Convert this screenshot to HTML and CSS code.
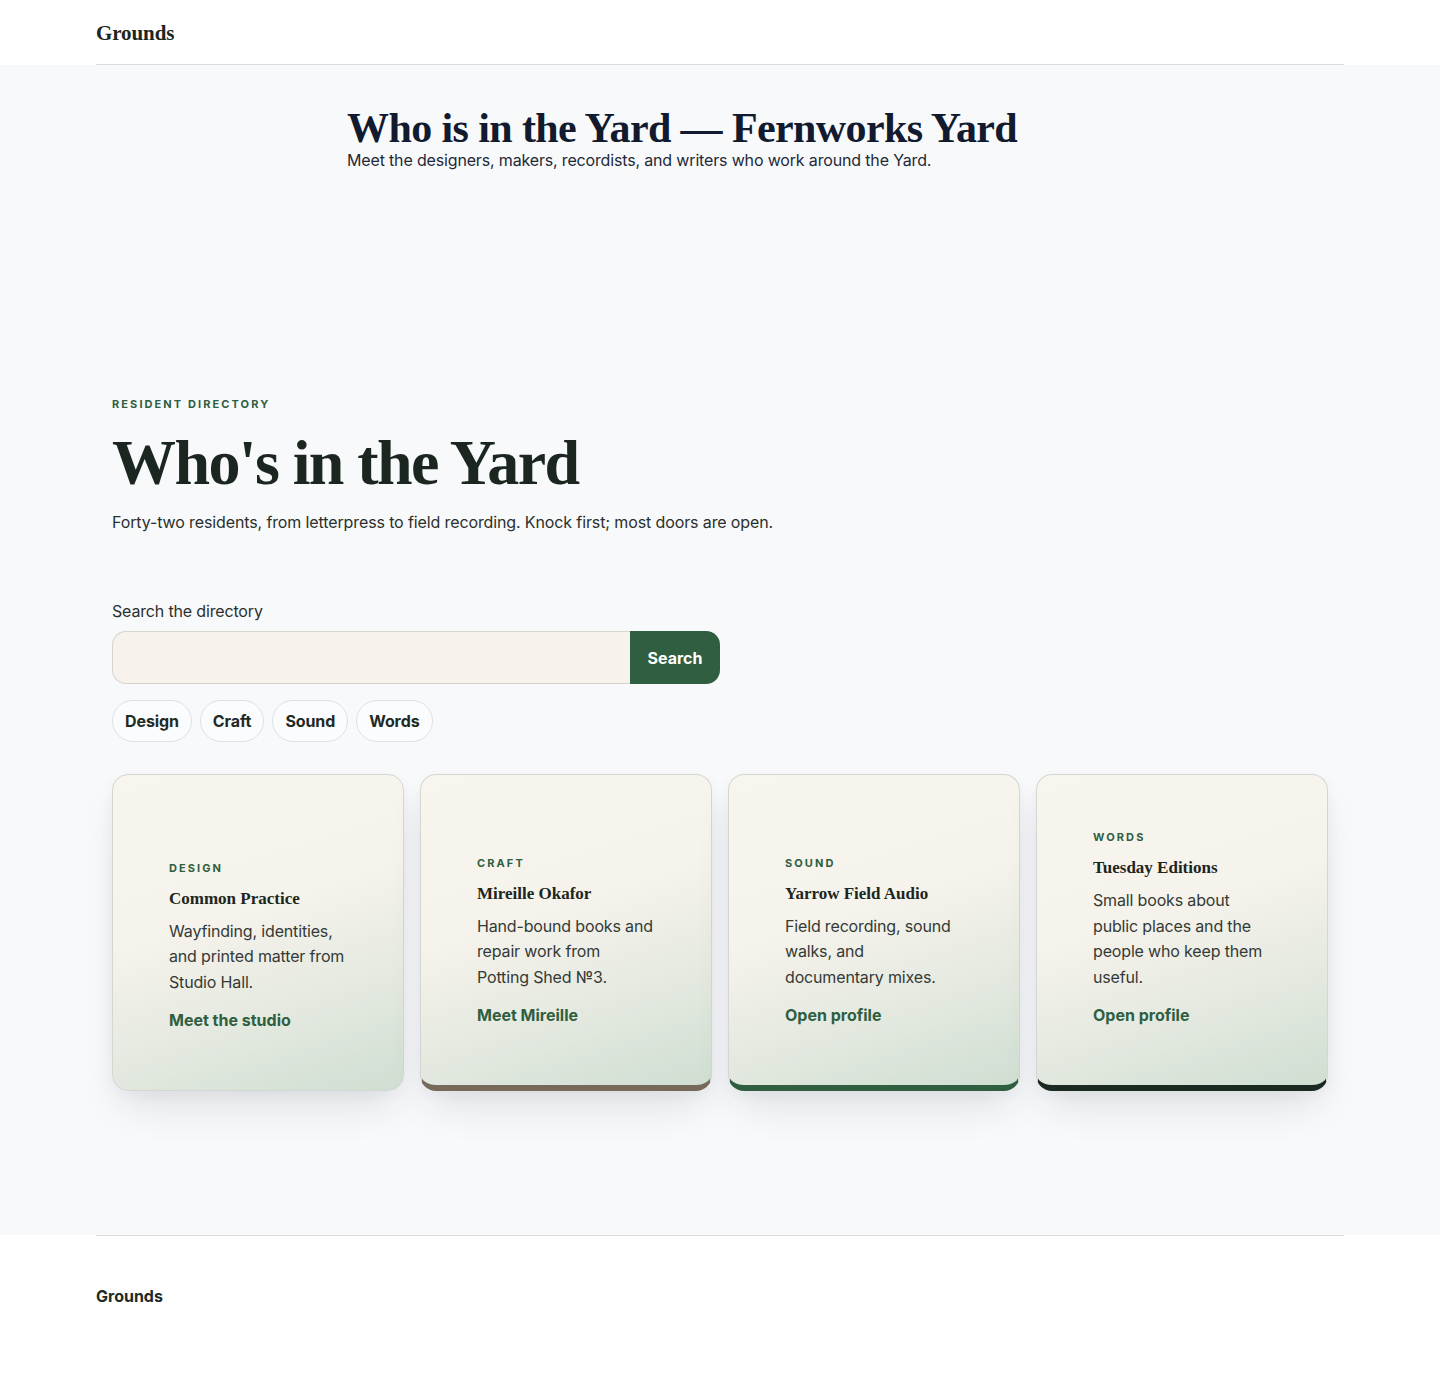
FILE: index.html
```html
<!DOCTYPE html>
<html lang="en">
<head>
<meta charset="utf-8">
<title>Who is in the Yard — Fernworks Yard</title>
<link rel="stylesheet" href="styles.css">
</head>
<body>
<header class="site-header">
  <div class="site-header__inner">
    <a class="logo" href="#">Grounds</a>
  </div>
</header>
<main class="page">
  <section class="intro">
    <h1 class="intro__title">Who is in the Yard — Fernworks Yard</h1>
    <p class="intro__sub">Meet the designers, makers, recordists, and writers who work around the Yard.</p>
  </section>
  <section class="directory">
    <p class="eyebrow">Resident directory</p>
    <h2 class="directory__title">Who's in the Yard</h2>
    <p class="directory__lede">Forty-two residents, from letterpress to field recording. Knock first; most doors are open.</p>
    <form class="search">
      <label class="search__label" for="q">Search the directory</label>
      <div class="search__row">
        <input class="search__input" id="q" type="text">
        <button class="search__btn" type="button">Search</button>
      </div>
    </form>
    <div class="chips">
      <button class="chip" type="button">Design</button>
      <button class="chip" type="button">Craft</button>
      <button class="chip" type="button">Sound</button>
      <button class="chip" type="button">Words</button>
    </div>
    <div class="cards">
      <article class="card">
        <p class="card__tag">Design</p>
        <h3 class="card__name">Common Practice</h3>
        <p class="card__text">Wayfinding, identities, and printed matter from Studio Hall.</p>
        <a class="card__link" href="#">Meet the studio</a>
      </article>
      <article class="card card--craft">
        <p class="card__tag">Craft</p>
        <h3 class="card__name">Mireille Okafor</h3>
        <p class="card__text">Hand-bound books and repair work from Potting Shed №3.</p>
        <a class="card__link" href="#">Meet Mireille</a>
      </article>
      <article class="card card--sound">
        <p class="card__tag">Sound</p>
        <h3 class="card__name">Yarrow Field Audio</h3>
        <p class="card__text">Field recording, sound walks, and documentary mixes.</p>
        <a class="card__link" href="#">Open profile</a>
      </article>
      <article class="card card--words">
        <p class="card__tag">Words</p>
        <h3 class="card__name">Tuesday Editions</h3>
        <p class="card__text">Small books about public places and the people who keep them useful.</p>
        <a class="card__link" href="#">Open profile</a>
      </article>
    </div>
  </section>
</main>
<footer class="site-footer">
  <div class="site-footer__inner">
    <span class="site-footer__brand">Grounds</span>
  </div>
</footer>
</body>
</html>
```
FILE: styles.css
```css
* { box-sizing: border-box; }

html, body {
  margin: 0;
  padding: 0;
}

body {
  font-family: Inter, "Noto Sans", "Liberation Sans", sans-serif;
  color: #1f2937;
  background: #ffffff;
  font-size: 16px;
  line-height: 1.5;
}

p, h1, h2, h3 { margin: 0; }

a { text-decoration: none; }

.site-header {
  background: #ffffff;
}

.site-header__inner {
  max-width: 1248px;
  margin: 0 auto;
  height: 65px;
  display: flex;
  align-items: center;
  border-bottom: 1px solid #dcdde0;
  padding-top: 3px;
}

.logo {
  font-family: "Liberation Serif", "Times New Roman", serif;
  font-weight: 700;
  font-size: 21px;
  color: #1c2620;
  letter-spacing: -0.1px;
}

.page {
  background: #f8f9fb;
  padding-bottom: 144px;
}

.intro {
  max-width: 746px;
  margin: 0 auto;
  padding-top: 42px;
}

.intro__title {
  font-family: "Liberation Serif", "Times New Roman", serif;
  font-weight: 700;
  font-size: 42px;
  line-height: 42px;
  color: #111a2e;
  letter-spacing: -0.6px;
  white-space: nowrap;
}

.intro__sub {
  margin-top: 1px;
  font-size: 16px;
  line-height: 20px;
  letter-spacing: -0.16px;
  color: #1f2937;
}

.directory {
  max-width: 1248px;
  margin: 0 auto;
  padding: 226px 16px 0;
}

.eyebrow {
  font-size: 11px;
  line-height: 16px;
  font-weight: 700;
  letter-spacing: 0.19em;
  text-transform: uppercase;
  color: #2f5e40;
}

.directory__title {
  margin-top: 16px;
  font-family: "Liberation Serif", "Times New Roman", serif;
  font-weight: 700;
  font-size: 64px;
  line-height: 70px;
  letter-spacing: -1.6px;
  color: #1c2620;
}

.directory__lede {
  margin-top: 12px;
  font-size: 16px;
  line-height: 24px;
  letter-spacing: -0.12px;
  color: #2a302c;
}

.search {
  margin-top: 65px;
  width: 608px;
}

.search__label {
  display: block;
  font-size: 16px;
  line-height: 24px;
  letter-spacing: -0.16px;
  color: #2a302c;
  margin-bottom: 8px;
}

.search__row {
  display: flex;
  height: 53px;
}

.search__input {
  flex: 1;
  min-width: 0;
  border: 1px solid #d6d4cf;
  border-right: 0;
  border-radius: 14px 0 0 14px;
  background: #f7f3ec;
  font: inherit;
  padding: 0 16px;
}

.search__btn {
  width: 90px;
  border: 0;
  border-radius: 0 14px 14px 0;
  background: #2f5e40;
  color: #ffffff;
  font: inherit;
  font-weight: 700;
  font-size: 16px;
  cursor: pointer;
}

.chips {
  display: flex;
  gap: 8px;
  margin-top: 16px;
}

.chip {
  height: 42px;
  padding: 0 12px;
  border: 1px solid #dfe1e4;
  border-radius: 999px;
  background: #fbfcfd;
  font: inherit;
  font-weight: 700;
  font-size: 16px;
  letter-spacing: -0.1px;
  color: #1f2a24;
}

.cards {
  margin-top: 32px;
  display: grid;
  grid-template-columns: repeat(4, 1fr);
  gap: 16px;
}

.card {
  display: flex;
  flex-direction: column;
  justify-content: flex-end;
  padding: 54px 56px 58px 56px;
  border: 1px solid #d3d6d2;
  border-radius: 16px;
  background: linear-gradient(162deg, #f8f5ee 0%, #f6f3ec 42%, #e4e9e0 72%, #cfded2 100%);
  box-shadow: 0 22px 40px -10px rgba(30, 41, 59, 0.13), 0 4px 14px rgba(30, 41, 59, 0.04);
}

.card--craft { border-bottom: 6px solid #76695a; }
.card--sound { border-bottom: 6px solid #2f5e40; }
.card--words { border-bottom: 6px solid #1b2a21; }

.card__tag {
  font-size: 11px;
  line-height: 16px;
  font-weight: 700;
  letter-spacing: 0.19em;
  text-transform: uppercase;
  color: #2f5e40;
}

.card__name {
  margin-top: 11px;
  font-family: "Liberation Serif", "Times New Roman", serif;
  font-weight: 700;
  font-size: 17px;
  line-height: 23px;
  color: #1c2620;
}

.card__text {
  margin-top: 9px;
  font-size: 16px;
  line-height: 25.6px;
  letter-spacing: -0.16px;
  color: #333a36;
}

.card__link {
  margin-top: 13px;
  font-weight: 700;
  font-size: 16px;
  line-height: 24px;
  color: #2f5e40;
}

.site-footer {
  background: #ffffff;
}

.site-footer__inner {
  max-width: 1248px;
  margin: 0 auto;
  border-top: 1px solid #dcdde0;
  padding: 48px 0 81px;
}

.site-footer__brand {
  font-weight: 700;
  font-size: 16px;
  line-height: 24px;
  color: #1f2a24;
}
```
